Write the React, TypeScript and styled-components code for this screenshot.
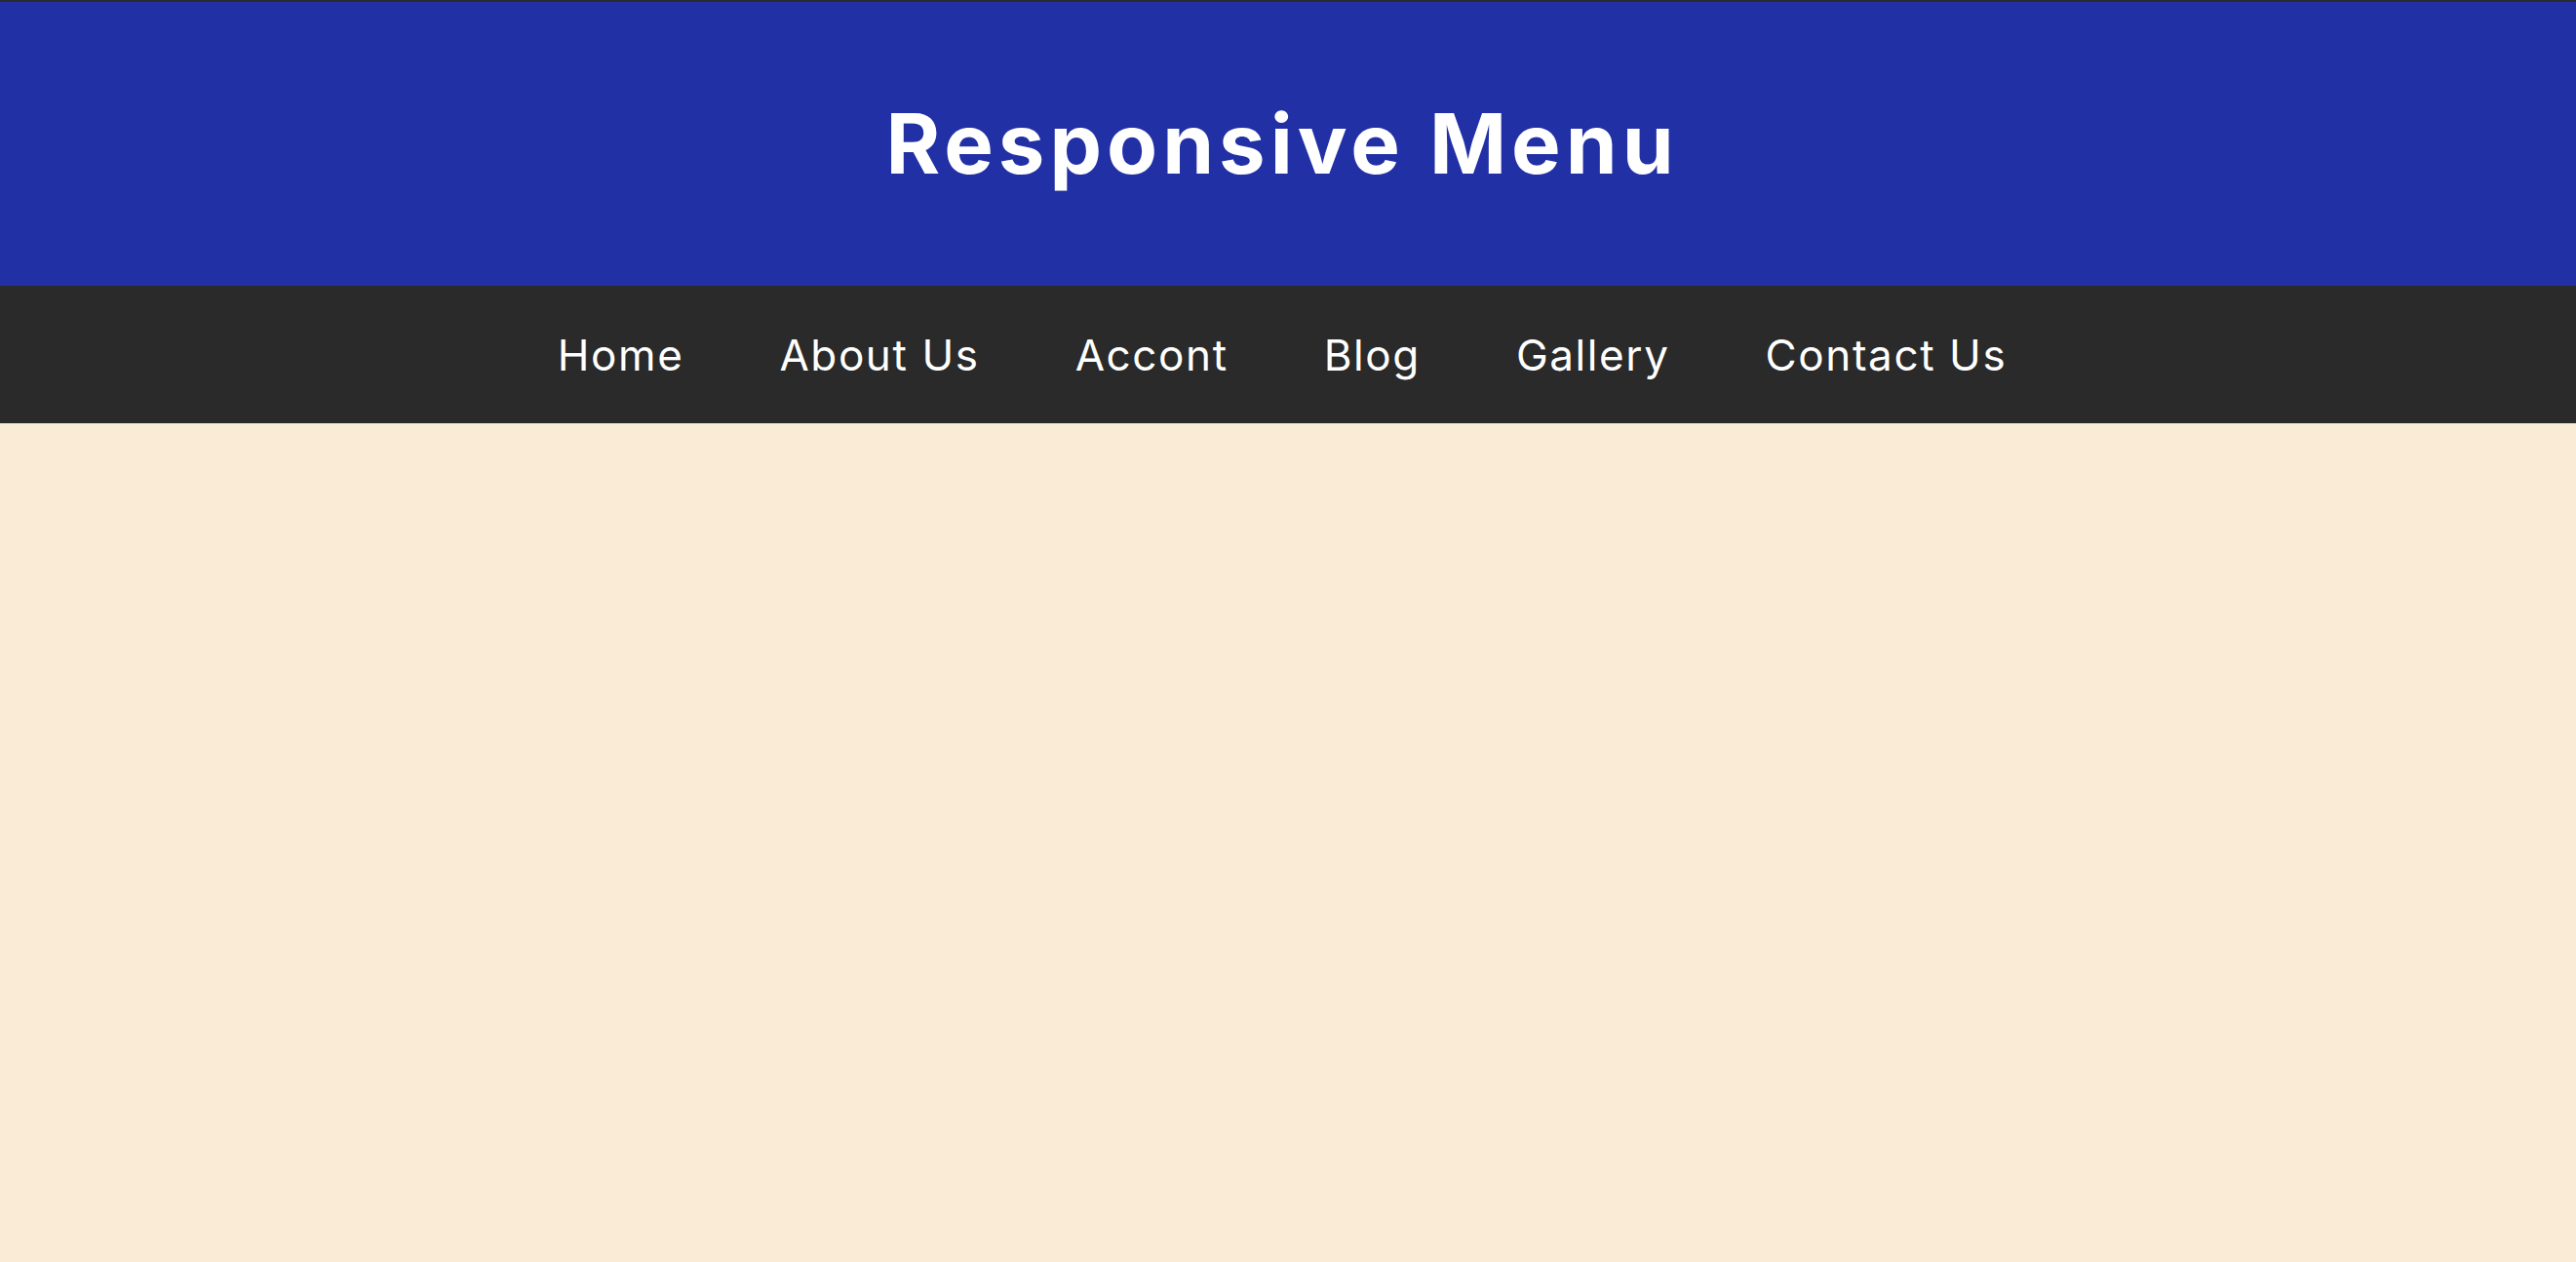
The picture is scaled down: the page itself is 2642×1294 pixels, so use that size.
import styled, { createGlobalStyle } from 'styled-components';

const GlobalStyle = createGlobalStyle`
  * {
    box-sizing: border-box;
  }
  html, body {
    margin: 0;
    padding: 0;
    min-height: 100%;
    background: #faebd7;
  }
  body {
    font-family: 'Inter', 'Noto Sans', sans-serif;
    border-top: 2px solid #2a2b2b;
    min-height: 1294px;
  }
`;

const links = ['Home', 'About Us', 'Accont', 'Blog', 'Gallery', 'Contact Us'];

const App = () => {
  return (
    <>
      <GlobalStyle />
      <Header>
        <Title>Responsive Menu</Title>
      </Header>
      <Nav>
        <MenuList>
          {links.map((label) => (
            <MenuItem key={label}>
              <MenuLink href="#">{label}</MenuLink>
            </MenuItem>
          ))}
        </MenuList>
      </Nav>
    </>
  );
};

export default App;

const Header = styled.header`
  height: 291px;
  background: #2230a6;
  display: flex;
  align-items: center;
  justify-content: center;
  padding-right: 12px;
`;

const Title = styled.h1`
  margin: 0;
  color: #ffffff;
  font-size: 85px;
  font-weight: 700;
  line-height: 1;
  letter-spacing: 5px;
`;

const Nav = styled.nav`
  height: 141px;
  background: #292a29;
  display: flex;
  align-items: center;
  justify-content: center;
  padding-right: 12px;
`;

const MenuList = styled.ul`
  list-style: none;
  margin: 0;
  padding: 0;
  display: flex;
  gap: 98px;
`;

const MenuItem = styled.li`
  display: block;
`;

const MenuLink = styled.a`
  color: #ffffff;
  text-decoration: none;
  font-size: 44px;
  font-weight: 400;
  line-height: 1;
  letter-spacing: 1.6px;
`;
